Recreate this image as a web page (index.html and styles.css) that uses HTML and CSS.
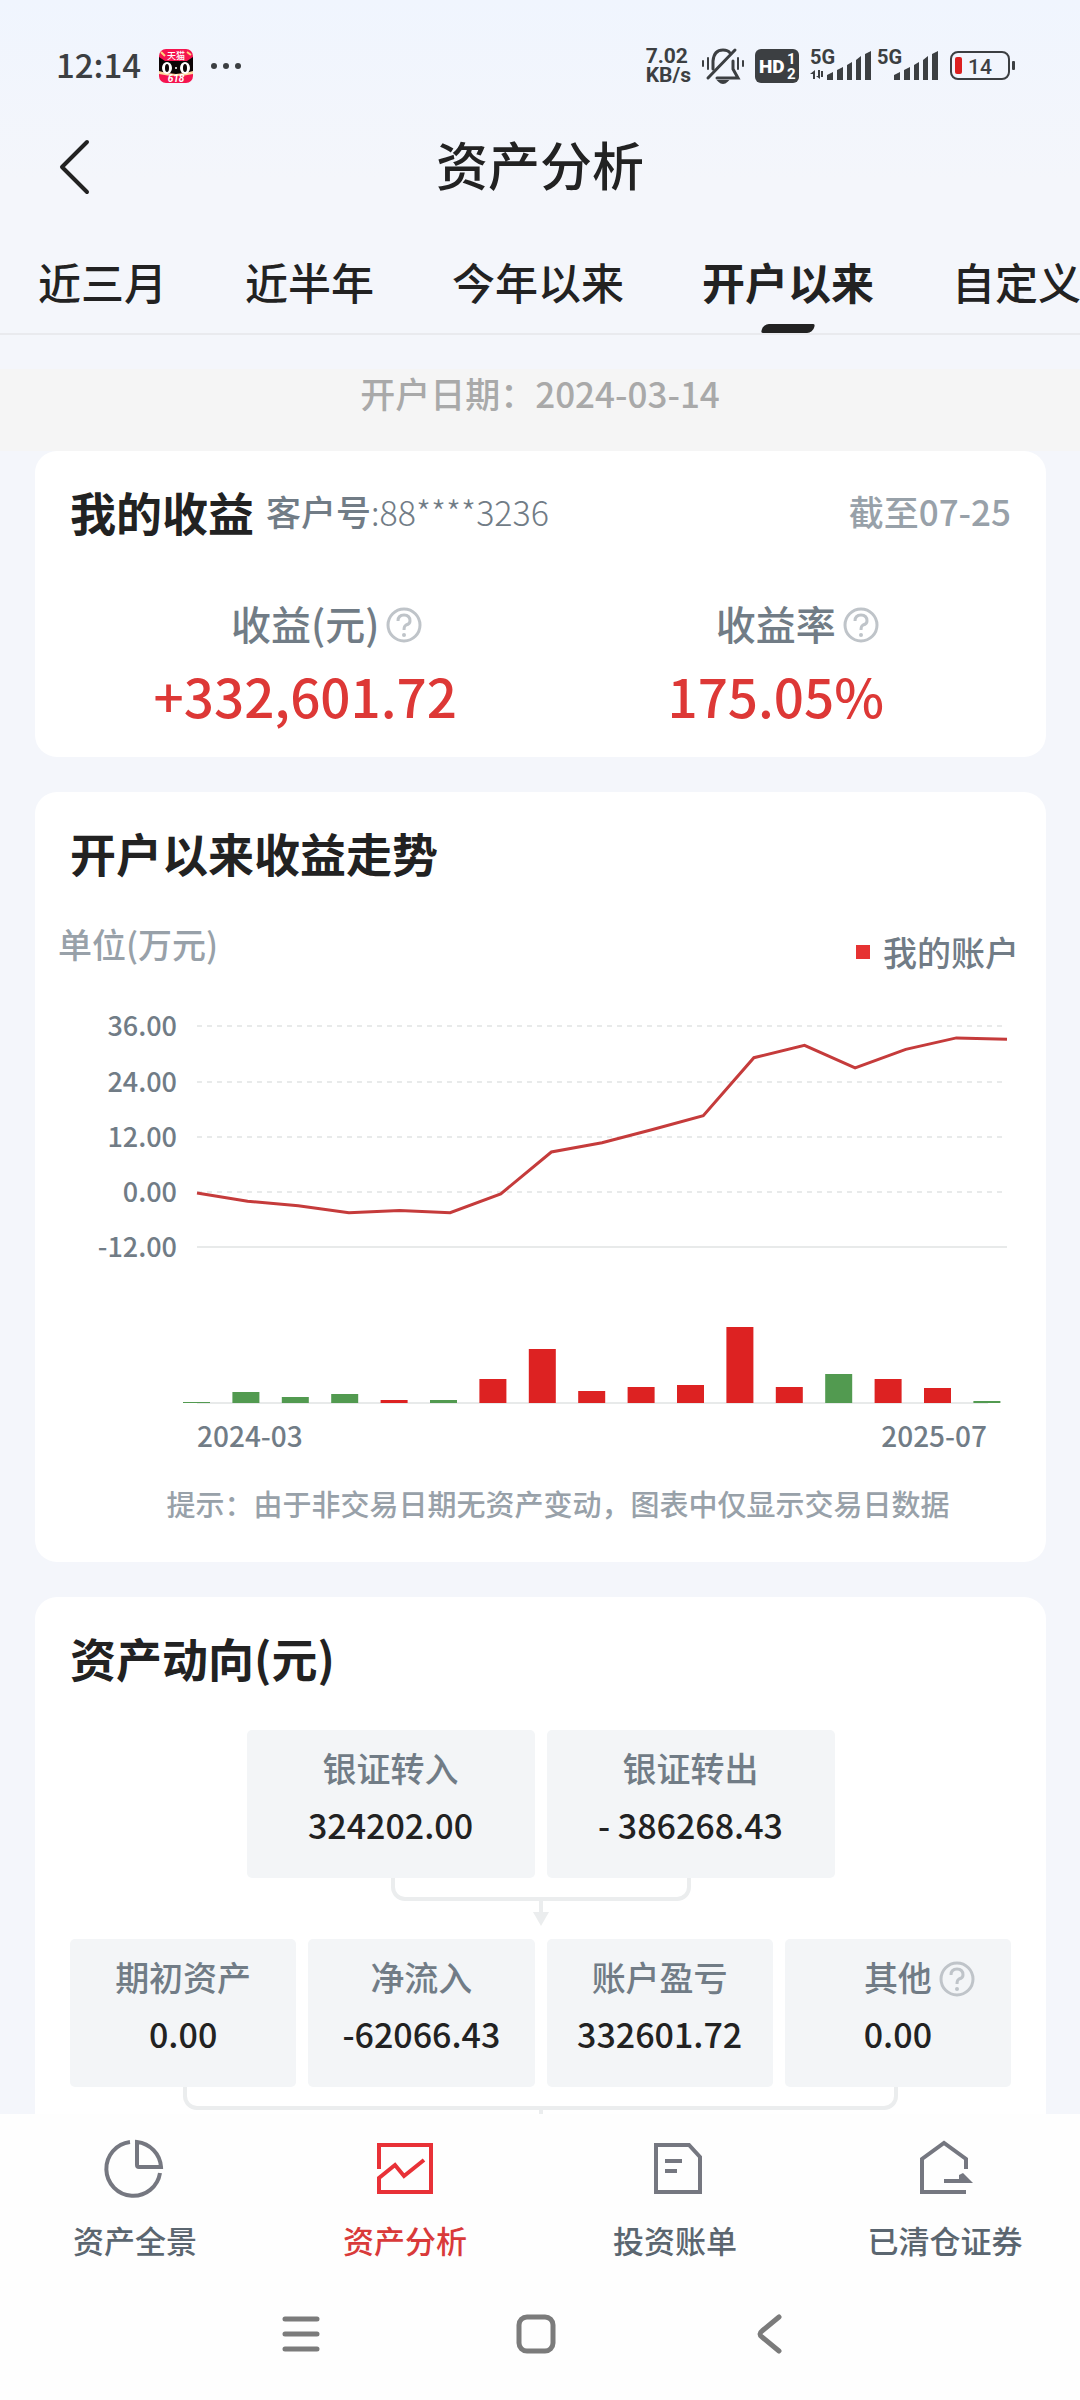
FILE: index.html
```html
<!DOCTYPE html>
<html lang="zh-CN">
  <head>
    <meta charset="utf-8">
    <meta name="viewport" content="width=device-width, initial-scale=1">
    <title>资产分析</title>
    <link rel="stylesheet" href="styles.css">
  </head>

  <body>
    <div class="app">
      <div class="status-bar">
        <div class="status-left">
          <span class="clock">12:14</span>
          <svg class="app-icon" width="34" height="34" viewBox="0 0 34 34">
            <rect width="34" height="34" rx="7" fill="#f5144f"/>
            <path d="M0 8 L6 12 H28 L34 8 V23 Q17 27 0 23 Z" fill="#0c0506"/>
            <path d="M0 22 Q17 28 34 22 V25 Q17 29 0 25 Z" fill="#ffd9a0"/>
            <path d="M2 3 L6 7 M28 3 L32 6" stroke="#ffd27a" stroke-width="2"/>
            <ellipse cx="8" cy="19" rx="5" ry="6" fill="#fff"/>
            <ellipse cx="26" cy="19" rx="5" ry="6" fill="#fff"/>
            <ellipse cx="8" cy="19" rx="2" ry="4" fill="#0c0506"/>
            <ellipse cx="26" cy="19" rx="2" ry="4" fill="#0c0506"/>
            <circle cx="17" cy="19" r="1" fill="#fff"/>
            <text x="17" y="10" class="app-icon-name">天猫</text>
            <text x="17" y="33" class="app-icon-sale">618</text>
          </svg>
          <svg width="30" height="8" viewBox="0 0 30 8" fill="#3c3f42">
            <circle cx="3" cy="4" r="3"/>
            <circle cx="15" cy="4" r="3"/>
            <circle cx="27" cy="4" r="3"/>
          </svg>
        </div>
        <div class="status-right">
          <div class="net-speed">7.02<br>KB/s</div>
          <svg class="bell" width="42" height="36" viewBox="0 0 42 36" fill="none" stroke="#3c3f42" stroke-width="3" stroke-linecap="round">
            <path d="M11 21 V13 Q12 2 21 2 Q26 2 28 5 M31 13 V21 L36 30 H15"/>
            <path d="M33 2 L6 30"/>
            <path d="M17 33 H25 Q21 37 17 33 Z" stroke-width="2" fill="#3c3f42"/>
            <path d="M6 10 V21 M1 13 V18 M36 10 V21 M41 13 V18" stroke-width="2"/>
          </svg>
          <svg class="hd" width="44" height="34" viewBox="0 0 44 34">
            <rect width="44" height="34" rx="6" fill="#3c3f42"/>
            <text x="4" y="24" class="hd-text">HD</text>
            <text x="32" y="15" class="hd-num">1</text>
            <text x="32" y="30" class="hd-num">2</text>
          </svg>
          <svg class="signal" width="62" height="34" viewBox="0 0 62 34" fill="#3c3f42">
            <text x="0" y="15" class="net-type">5G</text>
            <path d="M0 25 L5 21 V30 H3 V25 Z M8 21 H10 V30 L6 27 H8 Z M11 22 H13 V28 H11 Z"/>
            <path d="M17 26 L23 23 V31 H17 Z M27 21 L33 18 V31 H27 Z M37 16 L42 13 V31 H37 Z M46 11 L51 7 V31 H46 Z M55 5 L61 2 V31 H55 Z"/>
          </svg>
          <svg class="signal" width="62" height="34" viewBox="0 0 62 34" fill="#3c3f42">
            <text x="0" y="15" class="net-type">5G</text>
            <path d="M17 26 L23 23 V31 H17 Z M27 21 L33 18 V31 H27 Z M37 16 L42 13 V31 H37 Z M46 11 L51 7 V31 H46 Z M55 5 L61 2 V31 H55 Z"/>
          </svg>
          <svg class="battery" width="66" height="30" viewBox="0 0 66 30">
            <rect x="1" y="1" width="58" height="27" rx="7" fill="none" stroke="#3c3f42" stroke-width="2"/>
            <rect x="62" y="10" width="3" height="9" rx="1" fill="#3c3f42"/>
            <rect x="5" y="6" width="7" height="17" rx="2" fill="#dc2020"/>
            <text x="30" y="23" class="battery-level">14</text>
          </svg>
        </div>
      </div>

      <header class="header">
        <button class="back" type="button" aria-label="返回">
          <svg width="32" height="56" viewBox="0 0 32 56" fill="none" stroke="#222" stroke-width="4" stroke-linecap="round" stroke-linejoin="round">
            <path d="M29 3 L4 28 L29 53"/>
          </svg>
        </button>
        <h1 class="title">资产分析</h1>
      </header>

      <nav class="tabs">
        <button class="tab" type="button">近三月</button>
        <button class="tab" type="button">近半年</button>
        <button class="tab" type="button">今年以来</button>
        <button class="tab active" type="button">开户以来</button>
        <button class="tab" type="button">自定义</button>
      </nav>

      <main class="content">
        <div class="open-date">开户日期：2024-03-14</div>

        <section class="card">
          <div class="card-header">
            <h2 class="card-title">我的收益</h2>
            <span class="account">客户号<span class="account-no">:88****3236</span></span>
            <span class="as-of">截至07-25</span>
          </div>
          <div class="metrics">
            <div class="metric">
              <div class="metric-label">收益(元)
                <button class="help" type="button" aria-label="收益说明"><svg viewBox="0 0 36 36"><use href="#help-icon"/></svg></button>
              </div>
              <div class="metric-value">+332,601.72</div>
            </div>
            <div class="metric">
              <div class="metric-label">收益率
                <button class="help" type="button" aria-label="收益率说明"><svg viewBox="0 0 36 36"><use href="#help-icon"/></svg></button>
              </div>
              <div class="metric-value">175.05%</div>
            </div>
          </div>
        </section>

        <section class="card">
          <h2 class="card-title">开户以来收益走势</h2>
          <div class="chart-head">
            <span class="chart-unit">单位(万元)</span>
            <span class="legend">我的账户</span>
          </div>
          <svg class="chart" id="chart" viewBox="0 0 1011 460"></svg>
          <p class="tip">提示：由于非交易日期无资产变动，图表中仅显示交易日数据</p>
        </section>

        <section class="card">
          <h2 class="card-title">资产动向(元)</h2>
          <div class="flow">
            <div class="flow-row flow-row-top">
              <div class="flow-box">
                <div class="flow-label">银证转入</div>
                <div class="flow-value">324202.00</div>
              </div>
              <div class="flow-box">
                <div class="flow-label">银证转出</div>
                <div class="flow-value">- 386268.43</div>
              </div>
            </div>
            <div class="link link-top">
              <div class="link-bracket"></div>
              <div class="link-stem"></div>
              <div class="link-arrow"></div>
            </div>
            <div class="flow-row">
              <div class="flow-box">
                <div class="flow-label">期初资产</div>
                <div class="flow-value">0.00</div>
              </div>
              <div class="flow-box">
                <div class="flow-label">净流入</div>
                <div class="flow-value">-62066.43</div>
              </div>
              <div class="flow-box">
                <div class="flow-label">账户盈亏</div>
                <div class="flow-value">332601.72</div>
              </div>
              <div class="flow-box">
                <div class="flow-label">其他
                  <button class="help" type="button" aria-label="其他说明"><svg viewBox="0 0 36 36"><use href="#help-icon"/></svg></button>
                </div>
                <div class="flow-value">0.00</div>
              </div>
            </div>
            <div class="link link-bottom">
              <div class="link-bracket"></div>
              <div class="link-stem"></div>
              <div class="link-arrow"></div>
            </div>
          </div>
        </section>
      </main>

      <nav class="tab-bar">
        <a class="tab-item" href="#overview">
          <svg width="58" height="60" viewBox="0 0 58 60" fill="none" stroke="#757780" stroke-width="4">
            <path d="M24 4 A27 27 0 1 0 54 35"/>
            <path d="M31 4 V27 Q31 29 33 29 H55 A27 27 0 0 0 31 4 Z"/>
          </svg>
          资产全景
        </a>
        <a class="tab-item current" href="#analysis">
          <svg width="58" height="60" viewBox="0 0 58 60" fill="none" stroke="#e83137" stroke-width="4">
            <path d="M3 31 V7 H55 V54 H3 V40 L19 27 L28 38 L48 22"/>
          </svg>
          资产分析
        </a>
        <a class="tab-item" href="#bill">
          <svg width="58" height="60" viewBox="0 0 58 60" fill="none" stroke="#757780" stroke-width="4">
            <path d="M10 7 H43 L54 19 V54 H10 Z"/>
            <path d="M19 23 H36 M19 33 H31"/>
          </svg>
          投资账单
        </a>
        <a class="tab-item" href="#cleared">
          <svg width="58" height="60" viewBox="0 0 58 60" fill="none" stroke="#757780" stroke-width="4">
            <path d="M50 31 V21 L28 5 L6 21 V54 H50"/>
            <path d="M28 43 H50"/>
            <path d="M43 37 L47 35 L57 45 H43 Z" fill="#757780" stroke="none"/>
          </svg>
          已清仓证券
        </a>
      </nav>

      <div class="nav-bar">
        <button type="button" aria-label="菜单">
          <svg width="40" height="40" viewBox="0 0 40 40"><path d="M4 5 H36 M4 20 H36 M4 35 H36"/></svg>
        </button>
        <button type="button" aria-label="主页">
          <svg width="40" height="40" viewBox="0 0 40 40"><rect x="3" y="3" width="34" height="34" rx="8"/></svg>
        </button>
        <button type="button" aria-label="返回">
          <svg width="40" height="40" viewBox="0 0 40 40"><path d="M28 3 L11 17 Q7 20 11 23 L28 37"/></svg>
        </button>
      </div>
    </div>

    <svg class="defs" width="0" height="0">
      <symbol id="help-icon" viewBox="0 0 36 36">
        <circle cx="18" cy="18" r="16" fill="none" stroke="#bfc4c9" stroke-width="3"/>
        <path d="M12 14 Q12 8 18 8 Q24 8 24 14 Q24 17 20 18 Q18 19 18 23" fill="none" stroke="#bfc4c9" stroke-width="3"/>
        <circle cx="18" cy="28" r="2" fill="#bfc4c9"/>
      </symbol>
    </svg>

    <script type="text/javascript">
      const chart = document.getElementById('chart');

      // Cumulative profit per month, in 10k yuan
      const profit = [-0.2, -2, -3, -4.5, -4, -4.5, -0.4, 8.7, 10.7, 13.6, 16.6, 29.2, 31.9, 27, 31, 33.5, 33.2];

      // Change per month, bar height in px, negative is a loss
      const change = [-1, -11, -6, -9, 3, -3, 24, 54, 12, 16, 18, 76, 16, -29, 24, 15, -2];

      const left = 162;
      const right = 972;
      const zero = 191;
      const perUnit = 4.6;
      const barBase = 402;

      function add(name, attrs, text) {
        const el = document.createElementNS('http://www.w3.org/2000/svg', name);
        for (const key in attrs) {
          el.setAttribute(key, attrs[key]);
        }
        if (text) el.textContent = text;
        chart.appendChild(el);
      }

      // Grid and axis labels
      [36, 24, 12, 0, -12].forEach(value => {
        const y = Math.round(zero - value * perUnit);
        add('line', { x1: left, x2: right, y1: y, y2: y, class: value === -12 ? 'axis' : 'grid' });
        add('text', { x: 142, y: y + 10, class: 'label end' }, value.toFixed(2));
      });

      // Profit line
      const step = (right - left) / (profit.length - 1);
      const points = profit.map((value, i) => `${left + i * step},${zero - value * perUnit}`);
      add('polyline', { points: points.join(' '), class: 'profit' });

      // Monthly bars
      add('line', { x1: left, x2: 953, y1: barBase, y2: barBase, class: 'axis' });
      change.forEach((value, i) => {
        const height = Math.abs(value);
        add('rect', {
          x: 148 + i * 49.4,
          y: barBase - height,
          width: 27,
          height: height,
          class: value < 0 ? 'loss' : 'gain'
        });
      });

      add('text', { x: left, y: 446, class: 'label date' }, '2024-03');
      add('text', { x: 952, y: 446, class: 'label date end' }, '2025-07');
    </script>
  </body>
</html>
```
FILE: styles.css
```css
* {
  box-sizing: border-box;
  margin: 0;
  padding: 0;
}

body {
  font-family: "Noto Sans CJK SC", sans-serif;
  font-weight: 500;
  color: #222;
  background: #f4f6fb;
}

button {
  font: inherit;
  color: inherit;
  background: none;
  border: 0;
}

svg {
  display: block;
  overflow: visible;
}

.defs {
  position: absolute;
}

.app {
  display: flex;
  flex-direction: column;
  height: 100vh;
  background: linear-gradient(#f0f5fe, #f4f6fb 180px);
}

/* Status bar */
.status-bar {
  display: flex;
  justify-content: space-between;
  align-items: center;
  height: 112px;
  padding: 20px 64px 0 56px;
  color: #3c3f42;
}

.status-left,
.status-right {
  display: flex;
  align-items: center;
}

.status-left {
  gap: 18px;
}

.clock {
  font-size: 33px;
  line-height: 36px;
  padding-bottom: 4px;
}

.app-icon-name {
  font-size: 9px;
  fill: #fff;
  text-anchor: middle;
}

.app-icon-sale {
  font: italic 700 10px Roboto, sans-serif;
  fill: #fff;
  text-anchor: middle;
}

.net-speed {
  font: 700 21px/19px Roboto, sans-serif;
}

.bell,
.hd,
.battery {
  margin-left: 11px;
}

.signal {
  margin-left: 5px;
}

.hd + .signal {
  margin-left: 11px;
}

.hd-text {
  font: 900 19px Roboto, sans-serif;
  fill: #fff;
}

.hd-num {
  font: 700 15px Roboto, sans-serif;
  fill: #fff;
}

.net-type {
  font: 700 20px Roboto, sans-serif;
}

.battery-level {
  font: 500 21px Roboto, sans-serif;
  fill: #3c3f42;
  text-anchor: middle;
}

/* Header */
.header {
  display: grid;
  grid-template-columns: 90px 1fr 90px;
  align-items: center;
  height: 110px;
}

.back {
  display: flex;
  justify-content: flex-end;
}

.title {
  font-size: 52px;
  font-weight: 500;
  line-height: 60px;
  text-align: center;
  padding-bottom: 6px;
}

.tabs {
  display: flex;
  gap: 78px;
  height: 113px;
  padding: 0 38px;
  border-bottom: 2px solid #e9eaee;
  overflow: hidden;
}

.tab {
  position: relative;
  flex: none;
  font-size: 43px;
  line-height: 50px;
  padding-top: 6px;
}

.tab.active {
  font-weight: 700;
}

.tab.active::after {
  content: "";
  position: absolute;
  left: 50%;
  bottom: 0;
  width: 52px;
  height: 9px;
  margin-left: -26px;
  border-radius: 6px 2px;
  background: #222;
  transform: skewX(-12deg);
}

/* Scrolling content */
.content {
  flex: 1;
  min-height: 0;
  overflow: hidden;
  padding-top: 34px;
}

.open-date {
  height: 82px;
  padding-bottom: 34px;
  font-size: 35px;
  line-height: 48px;
  text-align: center;
  color: #a9a9a9;
  background: #f5f5f5;
}

.card {
  margin: 0 34px 35px 35px;
  padding: 30px 35px;
  border-radius: 22px;
  background: #fff;
}

.card-header {
  display: flex;
  align-items: center;
}

.card-title {
  font-size: 46px;
  font-weight: 700;
  line-height: 60px;
}

.account {
  margin-left: 12px;
  font-size: 35px;
  line-height: 48px;
  color: #717c86;
}

.account-no {
  font-size: 34px;
  font-weight: 300;
}

.as-of {
  margin-left: auto;
  font-size: 35px;
  line-height: 48px;
  color: #98a1a9;
}

.metrics {
  display: grid;
  grid-template-columns: 1fr 1fr;
  padding-top: 56px;
}

.metric {
  display: flex;
  flex-direction: column;
  align-items: center;
  gap: 14px;
}

.metric-label,
.flow-label {
  position: relative;
  color: #717c86;
}

.metric-label {
  font-size: 40px;
  line-height: 52px;
}

.metric-value {
  font-size: 53px;
  line-height: 64px;
  color: #dd3836;
}

/* Sits beside the label so that the label text stays centred */
.help {
  position: absolute;
  top: 50%;
  left: 100%;
  width: 36px;
  height: 36px;
  margin: -16px 0 0 7px;
}

/* Chart */
.chart-head {
  display: flex;
  justify-content: space-between;
  margin: 38px -8px 0 -12px;
  font-size: 34px;
  line-height: 48px;
}

.chart-unit {
  color: #98a1a9;
}

.legend {
  display: flex;
  align-items: center;
  gap: 13px;
  padding-top: 8px;
  color: #717c86;
}

.legend::before {
  content: "";
  width: 14px;
  height: 14px;
  background: #e63232;
}

.chart {
  width: calc(100% + 70px);
  margin: 25px -35px 0;
}

.grid,
.axis {
  stroke: #e8eaea;
  stroke-width: 2;
}

.grid {
  stroke-dasharray: 5;
}

.profit {
  fill: none;
  stroke: #c53b3b;
  stroke-width: 3;
}

.gain {
  fill: #dd2222;
}

.loss {
  fill: #529a50;
}

.label {
  font-size: 27px;
  fill: #717c86;
}

.date {
  font-size: 28px;
}

.end {
  text-anchor: end;
}

.tip {
  padding: 22px 0 9px 35px;
  font-size: 29px;
  line-height: 40px;
  text-align: center;
  white-space: nowrap;
  color: #98a1a9;
}

/* Asset flow */
.flow {
  padding-top: 43px;
}

.flow-row {
  display: grid;
  grid-template-columns: repeat(4, 1fr);
  gap: 12px;
}

.flow-row-top {
  grid-template-columns: repeat(2, 288px);
  justify-content: center;
}

.flow-box {
  display: flex;
  flex-direction: column;
  align-items: center;
  gap: 10px;
  height: 148px;
  padding-top: 14px;
  border-radius: 5px;
  background: #f3f5f7;
}

.flow-label {
  font-size: 34px;
  line-height: 48px;
}

.flow-value {
  font-size: 34px;
  line-height: 46px;
  white-space: nowrap;
}

.link {
  display: flex;
  flex-direction: column;
  align-items: center;
  height: 61px;
}

.link-bracket {
  width: 300px;
  height: 23px;
  border: 4px solid #ebedee;
  border-top: 0;
  border-radius: 0 0 14px 14px;
}

.link-bottom .link-bracket {
  width: 76%;
}

.link-stem {
  width: 4px;
  height: 11px;
  background: #ebedee;
}

.link-arrow {
  border: 8px solid transparent;
  border-top: 14px solid #ebedee;
  border-bottom: 0;
}

/* Bottom tabs */
.tab-bar {
  display: grid;
  grid-template-columns: repeat(4, 1fr);
  height: 166px;
  padding-top: 24px;
  background: #fefefe;
}

.tab-item {
  display: flex;
  flex-direction: column;
  align-items: center;
  gap: 20px;
  font-size: 31px;
  line-height: 44px;
  text-decoration: none;
  color: #5b6670;
}

.tab-item.current {
  color: #d93a3a;
}

.nav-bar {
  display: grid;
  grid-template-columns: repeat(3, 1fr);
  justify-items: center;
  height: 120px;
  padding: 34px 192px 46px 184px;
  background: #fefefe;
}

.nav-bar svg {
  fill: none;
  stroke: #7b7b7b;
  stroke-width: 5;
  stroke-linecap: round;
}
```
